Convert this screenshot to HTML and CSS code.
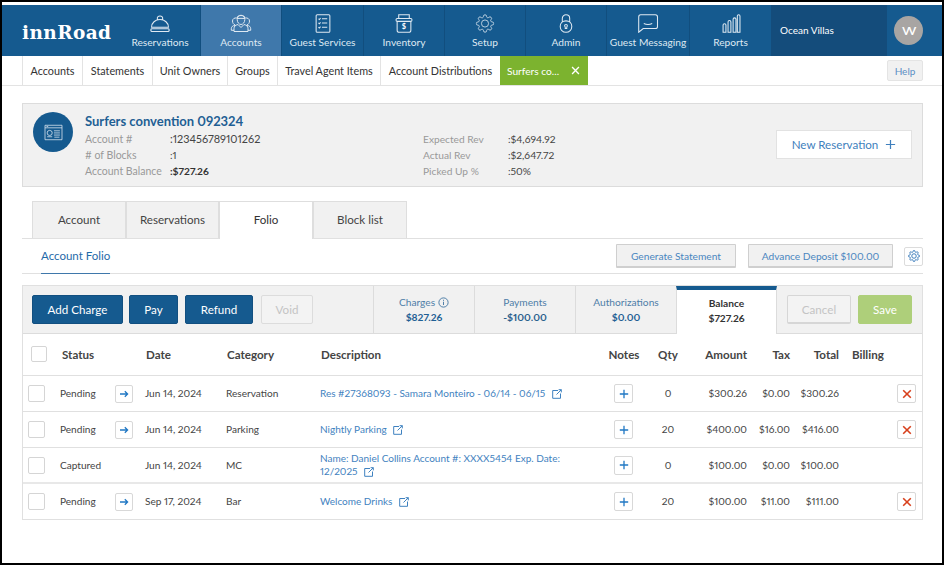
FILE: index.html
```html
<!DOCTYPE html>
<html lang="en">
<head>
<meta charset="utf-8">
<title>innRoad - Account Folio</title>
<link rel="stylesheet" href="styles.css">
</head>
<body>
<svg class="defs" width="0" height="0" aria-hidden="true">
  <symbol id="gear" viewBox="0 0 24 24">
    <circle cx="12" cy="12" r="4.5"/>
    <path d="M19.4 15a1.65 1.65 0 0 0 .33 1.82l.06.06a2 2 0 0 1 0 2.83 2 2 0 0 1-2.83 0l-.06-.06a1.65 1.65 0 0 0-1.82-.33 1.65 1.65 0 0 0-1 1.51V21a2 2 0 0 1-2 2 2 2 0 0 1-2-2v-.09A1.65 1.65 0 0 0 9 19.4a1.65 1.65 0 0 0-1.82.33l-.06.06a2 2 0 0 1-2.83 0 2 2 0 0 1 0-2.83l.06-.06a1.65 1.65 0 0 0 .33-1.82 1.65 1.65 0 0 0-1.51-1H3a2 2 0 0 1-2-2 2 2 0 0 1 2-2h.09A1.65 1.65 0 0 0 4.6 9a1.65 1.65 0 0 0-.33-1.82l-.06-.06a2 2 0 0 1 0-2.83 2 2 0 0 1 2.83 0l.06.06a1.65 1.65 0 0 0 1.82.33H9a1.65 1.65 0 0 0 1-1.51V3a2 2 0 0 1 2-2 2 2 0 0 1 2 2v.09a1.65 1.65 0 0 0 1 1.51 1.65 1.65 0 0 0 1.82-.33l.06-.06a2 2 0 0 1 2.83 0 2 2 0 0 1 0 2.83l-.06.06a1.65 1.65 0 0 0-.33 1.82V9a1.65 1.65 0 0 0 1.51 1H21a2 2 0 0 1 2 2 2 2 0 0 1-2 2h-.09a1.65 1.65 0 0 0-1.51 1z"/>
  </symbol>
  <symbol id="ext" viewBox="0 0 10 10">
    <path d="M6 1.5H.7v7.8h7.8V4.5M4.5 5.5 9.3.7M6.6.7h2.7v2.7"/>
  </symbol>
  <symbol id="arrow" viewBox="0 0 10 10">
    <path d="M1 5h7.5M5.8 2.2 8.6 5 5.8 7.8"/>
  </symbol>
  <symbol id="plus" viewBox="0 0 10 10">
    <path d="M5 .8v8.4M.8 5h8.4"/>
  </symbol>
  <symbol id="cross" viewBox="0 0 10 10">
    <path d="M1.2 1.2 8.8 8.8M8.8 1.2 1.2 8.8"/>
  </symbol>
</svg>

<div class="frame">
  <header class="nav">
    <div class="logo">innRoad</div>
    <a class="nav-item nav-wide">
      <svg class="nav-icon" viewBox="0 0 20 18"><path d="M2 12.5c0-4.2 3.5-7.2 8-7.2s8 3 8 7.2zM8 5.500c-.6-.7-.6-2.200.1-2.900.9-.9 2.900-.9 3.800 0 .7.7.7 2.200.1 2.900M2 14h16c.9 0 1 2.500 0 2.500H2c-1 0-.9-2.500 0-2.500z"/></svg>
      <span>Reservations</span>
    </a>
    <a class="nav-item nav-wide is-active">
      <svg class="nav-icon" viewBox="0 0 22 18"><path d="M11 1c2.500 0 3.800 1.800 3.800 4 0 2.600-1.700 5-3.800 5S7.200 7.600 7.200 5c0-2.200 1.300-4 3.800-4zM7.300 4C6.700 1.700 9 .8 11 .8s4.300.9 3.700 3.200c-2.400-.2-5-.2-7.400 0zM6.800 3.500C4.500 3.100 2.500 4.300 2.500 6.500c0 1.900 1 3.500 2.700 3.900M15.200 3.500c2.300-.4 4.300.8 4.300 3 0 1.900-1 3.500-2.700 3.900M8 10c-2.800.6-4 2-4 4v3h14v-3c0-2-1.200-3.400-4-4l-3 3zM5 10.700c-2.200.5-3.700 1.500-3.700 3.500v1.600H4M17 10.700c2.200.5 3.700 1.500 3.700 3.500v1.600H18"/></svg>
      <span>Accounts</span>
    </a>
    <a class="nav-item nav-mid">
      <svg class="nav-icon" viewBox="0 0 16 18"><path d="M2.500.7h11c.6 0 1 .4 1 1v14.600c0 .6-.4 1-1 1h-11c-.6 0-1-.4-1-1V1.700c0-.6.4-1 1-1zM7 4.500h5M7 8.500h5M7 12.500h5M3.700 4.500l.8.800 1.200-1.400M3.700 8.500l.8.800 1.200-1.400M3.700 12.500l.8.800 1.200-1.400"/></svg>
      <span>Guest Services</span>
    </a>
    <a class="nav-item nav-wide">
      <svg class="nav-icon" viewBox="0 0 18 18"><path d="M4 .7h10v3.500H4zM2.500 4.200h13c.6 0 1 .4 1 1v.8c0 .6-.4 1-1 1V15.300c0 1.100-.8 2-2 2H4.500c-1.200 0-2-.9-2-2V7c-.6 0-1-.4-1-1v-.8c0-.6.4-1 1-1zM2.500 7h13"/><text class="jar-text" x="9" y="14.500" text-anchor="middle">$</text></svg>
      <span>Inventory</span>
    </a>
    <a class="nav-item nav-wide">
      <svg class="nav-icon" viewBox="0 0 24 24"><use href="#gear"/></svg>
      <span>Setup</span>
    </a>
    <a class="nav-item nav-wide">
      <svg class="nav-icon" viewBox="0 0 16 18"><path d="M4.500 7.500V4.200C4.500 2.200 6 .8 8 .8s3.500 1.400 3.500 3.400v3.300M8 6.500c3.200 0 5.500 2.300 5.500 5.300S11.200 17.300 8 17.300s-5.500-2.500-5.500-5.500S4.800 6.500 8 6.500zM8 10c.8 0 1.300.6 1.300 1.200 0 .5-.2.800-.6 1.100v1.500H7.300v-1.500c-.4-.3-.6-.6-.6-1.100C6.700 10.600 7.200 10 8 10z"/></svg>
      <span>Admin</span>
    </a>
    <a class="nav-item nav-msg">
      <svg class="nav-icon" viewBox="0 0 20 18"><path d="M3 .8h14c1.200 0 2 .8 2 2v9c0 1.200-.8 2-2 2H5.500L1.200 17.300V2.800C1.200 1.600 1.900.8 3 .8zM6 9c2.500 1.200 5.500 1.200 8 0"/></svg>
      <span>Guest Messaging</span>
    </a>
    <a class="nav-item nav-wide nav-last">
      <svg class="nav-icon" viewBox="0 0 18 18"><path d="M1.500 10.500c0-1.800 2.700-1.800 2.700 0v6.800H1.500zM6.200 7.500c0-1.800 2.700-1.800 2.700 0v9.800H6.200zM11 5c0-1.800 2.700-1.800 2.700 0v12.300H11zM15 2c0-1.800 2.500-1.800 2.500 0v15.300H15z"/></svg>
      <span>Reports</span>
    </a>
    <div class="property">Ocean Villas</div>
    <div class="user"><span class="avatar">VV</span></div>
  </header>

  <nav class="subnav">
    <a class="sub-item">Accounts</a>
    <a class="sub-item">Statements</a>
    <a class="sub-item">Unit Owners</a>
    <a class="sub-item">Groups</a>
    <a class="sub-item">Travel Agent Items</a>
    <a class="sub-item">Account Distributions</a>
    <a class="sub-item sub-current">Surfers co...
      <svg class="sub-close" viewBox="0 0 10 10"><use href="#cross"/></svg>
    </a>
    <button class="help">Help</button>
  </nav>

  <main class="main">
    <section class="summary">
      <div class="summary-icon">
        <svg viewBox="0 0 22 20"><path d="M1 1.500h20v17H1zM1 4.500h20M2.800 3h2M11.500 8h7M11.500 10.500h7M11.500 13h7M12 15.500h6"/><circle cx="6.500" cy="10.500" r="3"/><path d="M3.500 15h6"/></svg>
      </div>
      <div class="summary-main">
        <h1 class="summary-title">Surfers convention 092324</h1>
        <dl class="facts">
          <dt>Account #</dt><dd class="long">:123456789101262</dd>
          <dt># of Blocks</dt><dd>:1</dd>
          <dt>Account Balance</dt><dd class="strong">:$727.26</dd>
        </dl>
      </div>
      <dl class="facts facts-right">
        <dt>Expected Rev</dt><dd>:$4,694.92</dd>
        <dt>Actual Rev</dt><dd>:$2,647.72</dd>
        <dt>Picked Up %</dt><dd>:50%</dd>
      </dl>
      <button class="new-res">New Reservation
        <svg viewBox="0 0 10 10"><use href="#plus"/></svg>
      </button>
    </section>

    <div class="tabs">
      <a class="tab">Account</a>
      <a class="tab">Reservations</a>
      <a class="tab tab-current">Folio</a>
      <a class="tab">Block list</a>
    </div>

    <div class="toolbar">
      <a class="folio-link">Account Folio</a>
      <button class="tool-btn tool-gen">Generate Statement</button>
      <button class="tool-btn tool-adv">Advance Deposit $100.00</button>
      <button class="gear-btn"><svg viewBox="0 0 24 24"><use href="#gear"/></svg></button>
    </div>

    <section class="panel">
      <div class="panel-head">
        <div class="actions">
          <button class="btn btn-primary btn-add">Add Charge</button>
          <button class="btn btn-primary btn-pay">Pay</button>
          <button class="btn btn-primary btn-refund">Refund</button>
          <button class="btn btn-off btn-void">Void</button>
        </div>
        <div class="totals">
          <div class="total">
            <span class="total-label">Charges <svg class="info" viewBox="0 0 10 10"><circle cx="5" cy="5" r="4.200"/><path d="M5 4.300v3M5 2.500v1"/></svg></span>
            <b>$827.26</b>
          </div>
          <div class="total"><span class="total-label">Payments</span><b>-$100.00</b></div>
          <div class="total"><span class="total-label">Authorizations</span><b>$0.00</b></div>
          <div class="total total-current"><span class="total-label">Balance</span><b>$727.26</b></div>
        </div>
        <div class="confirm">
          <button class="btn btn-off btn-cancel">Cancel</button>
          <button class="btn btn-save">Save</button>
        </div>
      </div>

      <div class="row row-head">
        <span class="check check-head"></span>
        <span>Status</span>
        <span></span>
        <span>Date</span>
        <span>Category</span>
        <span>Description</span>
        <span class="center">Notes</span>
        <span class="center">Qty</span>
        <span class="right">Amount</span>
        <span class="right">Tax</span>
        <span class="right">Total</span>
        <span class="billing">Billing</span>
        <span></span>
      </div>

      <div class="row">
        <span class="check"></span>
        <span>Pending</span>
        <button class="icon-btn"><svg viewBox="0 0 10 10"><use href="#arrow"/></svg></button>
        <span>Jun 14, 2024</span>
        <span>Reservation</span>
        <a class="desc">Res #27368093 - Samara Monteiro - 06/14 - 06/15 <svg class="ext" viewBox="0 0 10 10"><use href="#ext"/></svg></a>
        <button class="icon-btn plus-btn"><svg viewBox="0 0 10 10"><use href="#plus"/></svg></button>
        <span class="center">0</span>
        <span class="right">$300.26</span>
        <span class="right">$0.00</span>
        <span class="right">$300.26</span>
        <span></span>
        <button class="icon-btn del-btn"><svg viewBox="0 0 10 10"><use href="#cross"/></svg></button>
      </div>

      <div class="row">
        <span class="check"></span>
        <span>Pending</span>
        <button class="icon-btn"><svg viewBox="0 0 10 10"><use href="#arrow"/></svg></button>
        <span>Jun 14, 2024</span>
        <span>Parking</span>
        <a class="desc">Nightly Parking <svg class="ext" viewBox="0 0 10 10"><use href="#ext"/></svg></a>
        <button class="icon-btn plus-btn"><svg viewBox="0 0 10 10"><use href="#plus"/></svg></button>
        <span class="center">20</span>
        <span class="right">$400.00</span>
        <span class="right">$16.00</span>
        <span class="right">$416.00</span>
        <span></span>
        <button class="icon-btn del-btn"><svg viewBox="0 0 10 10"><use href="#cross"/></svg></button>
      </div>

      <div class="row">
        <span class="check"></span>
        <span>Captured</span>
        <span></span>
        <span>Jun 14, 2024</span>
        <span>MC</span>
        <a class="desc">Name: Daniel Collins Account #: XXXX5454 Exp. Date: 12/2025 <svg class="ext" viewBox="0 0 10 10"><use href="#ext"/></svg></a>
        <button class="icon-btn plus-btn"><svg viewBox="0 0 10 10"><use href="#plus"/></svg></button>
        <span class="center">0</span>
        <span class="right">$100.00</span>
        <span class="right">$0.00</span>
        <span class="right">$100.00</span>
        <span></span>
        <span></span>
      </div>

      <div class="row row-last">
        <span class="check"></span>
        <span>Pending</span>
        <button class="icon-btn"><svg viewBox="0 0 10 10"><use href="#arrow"/></svg></button>
        <span>Sep 17, 2024</span>
        <span>Bar</span>
        <a class="desc">Welcome Drinks <svg class="ext" viewBox="0 0 10 10"><use href="#ext"/></svg></a>
        <button class="icon-btn plus-btn"><svg viewBox="0 0 10 10"><use href="#plus"/></svg></button>
        <span class="center">20</span>
        <span class="right">$100.00</span>
        <span class="right">$11.00</span>
        <span class="right">$111.00</span>
        <span></span>
        <button class="icon-btn del-btn"><svg viewBox="0 0 10 10"><use href="#cross"/></svg></button>
      </div>
    </section>
  </main>
</div>
</body>
</html>
```

FILE: styles.css
```css
* { box-sizing: border-box; }
html, body { margin: 0; padding: 0; }
body {
  width: 944px;
  height: 565px;
  overflow: hidden;
  background: #fff;
  color: #444;
  font-family: Lato, "Liberation Sans", sans-serif;
  font-size: 11px;
  font-variant-numeric: proportional-nums;
}
button { font-family: inherit; font-variant-numeric: inherit; cursor: pointer; padding: 0; }
.defs { position: absolute; }
.frame {
  width: 944px;
  height: 565px;
  border: 2px solid #000;
  padding-top: 3px;
  overflow: hidden;
}

/* top navigation */
.nav {
  display: flex;
  height: 51px;
  background: #155a8f;
  color: #dfe9f2;
}
.logo {
  width: 118px;
  padding: 17px 0 0 20px;
  font-family: "DejaVu Serif", serif;
  font-size: 18.500px;
  font-weight: 700;
  letter-spacing: .4px;
  color: #fff;
  white-space: nowrap;
}
.nav-item {
  display: flex;
  flex-direction: column;
  align-items: center;
  padding-top: 9px;
  border-right: 1px solid #114e7e;
  font-size: 10.200px;
  white-space: nowrap;
}
.nav-wide { width: 81px; }
.nav-mid { width: 82px; }
.nav-msg { width: 83px; }
.nav-last { border-right: 0; }
.is-active { background: #3f78ab; }
.nav-icon {
  width: 22px;
  height: 19px;
  margin-bottom: 3px;
  fill: none;
  stroke: #dfe9f2;
  stroke-width: 1;
}
.jar-text { font-size: 7px; font-weight: 700; fill: #fff; stroke: none; font-family: Lato, sans-serif; }
.property {
  width: 116px;
  background: #144c7b;
  color: #fff;
  padding: 19px 0 0 9px;
  font-size: 10px;
  line-height: 13px;
}
.user { flex: 1; display: flex; align-items: center; padding: 0 0 1px 7px; }
.avatar {
  width: 29px;
  height: 29px;
  border-radius: 50%;
  background: #a8a5a3;
  color: #fff;
  font-size: 11px;
  font-weight: 700;
  letter-spacing: -1.500px;
  line-height: 29px;
  text-align: center;
}

/* secondary navigation */
.subnav {
  display: flex;
  height: 30px;
  padding-left: 20px;
  border-bottom: 1px solid #e3e3e3;
  position: relative;
}
.sub-item {
  display: flex;
  align-items: center;
  justify-content: center;
  height: 29px;
  border-left: 1px solid #e3e3e3;
  color: #333;
  font-size: 10.800px;
  white-space: nowrap;
}
.sub-item:nth-child(1) { width: 60px; }
.sub-item:nth-child(2) { width: 70px; }
.sub-item:nth-child(3) { width: 75px; }
.sub-item:nth-child(4) { width: 50px; }
.sub-item:nth-child(5) { width: 103px; }
.sub-item:nth-child(6) { width: 120px; }
.sub-current {
  width: 88px;
  border-left: 0;
  background: #7cb32f;
  color: #fff;
  font-size: 10.200px;
  justify-content: flex-start;
  padding-left: 7px;
  gap: 12px;
}
.sub-close { width: 9px; height: 9px; fill: none; stroke: #fff; stroke-width: 1.500; }
.help {
  width: 36px;
  height: 21px;
  margin: 4px 19px 0 auto;
  background: #f1f1f1;
  border: 1px solid #e4e4e4;
  border-radius: 2px;
  color: #5b8fc4;
  font-size: 10px;
}

/* main */
.main { padding: 17px 19px 0 20px; }
.summary {
  display: flex;
  height: 84px;
  background: #f1f1f1;
  border: 1px solid #dcdcdc;
  padding: 8px 10px 0 10px;
}
.summary-icon {
  flex: none;
  width: 40px;
  height: 40px;
  border-radius: 50%;
  background: #155a8f;
  display: flex;
  align-items: center;
  justify-content: center;
}
.summary-icon svg { width: 19px; height: 17px; fill: none; stroke: #dfe9f2; stroke-width: .9; }
.summary-main { width: 338px; margin-left: 12px; }
.summary-title {
  margin: 0;
  font-size: 13px;
  line-height: 18px;
  font-weight: 700;
  color: #1f5f94;
}
.facts {
  display: grid;
  grid-template-columns: 85px auto;
  margin: 1px 0 0;
  font-size: 10.500px;
  line-height: 16px;
}
.facts dt { color: #999; }
.facts dd { margin: 0; color: #444; font-size: 10.200px; }
.facts dd.long { font-size: 10.900px; }
.facts dd.strong { font-weight: 700; color: #333; }
.facts-right { width: 353px; margin-top: 19px; align-self: flex-start; font-size: 10.200px; }
.new-res {
  width: 136px;
  height: 29px;
  margin-top: 18px;
  background: #fff;
  border: 1px solid #e2e2e2;
  color: #3f7fbd;
  font-size: 11.600px;
  display: flex;
  align-items: center;
  justify-content: center;
  gap: 7px;
}
.new-res svg { width: 11px; height: 11px; fill: none; stroke: #3f7fbd; stroke-width: 1.100; }

/* tabs */
.tabs {
  display: flex;
  height: 38px;
  margin-top: 14px;
  padding-left: 10px;
  border-bottom: 1px solid #e0e0e0;
}
.tab {
  width: 94px;
  height: 37px;
  padding-bottom: 2px;
  background: #f1f1f1;
  border: 1px solid #dedede;
  border-bottom: 0;
  display: flex;
  align-items: center;
  justify-content: center;
  font-size: 11.600px;
  color: #444;
}
.tab:nth-child(2) { width: 93px; }
.tab-current { height: 38px; background: #fff; color: #333; }

.toolbar {
  display: flex;
  align-items: center;
  height: 35px;
  border-bottom: 1px solid #e0e0e0;
  position: relative;
}
.folio-link {
  align-self: stretch;
  display: flex;
  align-items: center;
  margin: 0 0 -1px 19px;
  padding: 0 0 1px;
  border-bottom: 1px solid #3f78ab;
  color: #1f6aa8;
  font-size: 11.500px;
}
.tool-btn {
  height: 24px;
  background: #f1f1f1;
  border: 1px solid #cfcfcf;
  border-bottom-width: 2px;
  border-radius: 1px;
  color: #4a86c0;
  font-size: 10.200px;
}
.tool-gen { width: 120px; margin-left: auto; }
.tool-adv { width: 145px; margin-left: 12px; }
.gear-btn {
  width: 19px;
  height: 19px;
  margin-left: 11px;
  background: #fff;
  border: 1px solid #dcdcdc;
  border-radius: 2px;
  display: flex;
  align-items: center;
  justify-content: center;
}
.gear-btn svg { width: 12px; height: 12px; fill: none; stroke: #3f7fbd; stroke-width: 2; }

/* folio panel */
.panel {
  margin-top: 11px;
  border: 1px solid #e0e0e0;
}
.panel-head {
  display: flex;
  height: 48px;
  background: #f1f1f1;
  border-bottom: 1px solid #dcdcdc;
}
.actions {
  width: 350px;
  display: flex;
  padding: 9px 0 0 9px;
}
.btn {
  height: 29px;
  border-radius: 2px;
  font-size: 11.600px;
}
.btn-primary { background: #155a8f; border: 1px solid #124f80; color: #fff; }
.btn-off { background: #f3f3f3; border: 1px solid #dcdcdc; color: #c4c4c4; }
.btn-add { width: 91px; }
.btn-pay { width: 49px; margin-left: 6px; }
.btn-refund { width: 68px; margin-left: 7px; }
.btn-void { width: 52px; margin-left: 8px; }
.totals { display: flex; }
.total {
  width: 101px;
  display: flex;
  flex-direction: column;
  align-items: center;
  justify-content: center;
  border-left: 1px solid #dcdcdc;
  font-size: 10.200px;
  line-height: 15px;
  color: #1f5f94;
}
.total b { font-weight: 700; font-size: 10.200px; }
.total-label { display: flex; align-items: center; gap: 3px; color: #4f7ea8; }
.total:nth-child(2) b { color: #2a5f8d; }
.total:nth-child(3) b { color: #1f5f94; }
.info { width: 11px; height: 11px; fill: none; stroke: #4f7ea8; stroke-width: .9; }
.total-current {
  background: #fff;
  border-top: 4px solid #155a8f;
  border-right: 1px solid #dcdcdc;
  margin-bottom: -1px;
  padding-bottom: 2px;
}
.total-current .total-label { color: #333; font-weight: 700; }
.total-current b { color: #333; }
.confirm { display: flex; padding: 9px 0 0 10px; }
.btn-cancel { width: 64px; border-width: 1px 1px 2px; border-color: #d6d6d6; }
.btn-save { width: 54px; margin-left: 7px; background: #aecf7a; border: 1px solid #aecf7a; color: #fff; }

/* table */
.row {
  display: grid;
  grid-template-columns: 32px 55px 30px 81px 94px 285px 38px 50px 54px 43px 49px 58px 19px;
  align-items: center;
  height: 36px;
  padding-left: 5px;
  border-bottom: 1px solid #e0e0e0;
  font-size: 10.100px;
  line-height: 13px;
  color: #444;
}
.row-head {
  height: 42px;
  padding-bottom: 1px;
  font-size: 11.600px;
  font-weight: 700;
  color: #444;
}
.row-last { height: 35px; border-bottom: 0; }
.row:nth-of-type(5) { border-bottom: 2px solid #e8e8e8; }
.center { text-align: center; }
.right { text-align: right; }
.billing { padding-left: 13px; }
.row-head > span:nth-child(2) { padding-left: 2px; }
.row-head > span:nth-child(4),
.row-head > span:nth-child(5),
.row-head > span:nth-child(6) { padding-left: 1px; }
.check {
  width: 17px;
  height: 17px;
  background: #fff;
  border: 1px solid #d5d5d5;
  border-radius: 2px;
}
.check-head { margin-left: 3px; width: 16px; height: 16px; }
.desc { color: #3f82c0; padding-right: 30px; font-size: 10px; }
.ext { width: 10px; height: 10px; margin-left: 4px; fill: none; stroke: #3f82c0; stroke-width: 1; vertical-align: -1.500px; }
.icon-btn {
  width: 18px;
  height: 18px;
  background: #fff;
  border: 1px solid #d8d8d8;
  border-radius: 2px;
  display: flex;
  align-items: center;
  justify-content: center;
}
.icon-btn svg { width: 10px; height: 10px; fill: none; stroke: #2178c4; stroke-width: 1.300; }
.plus-btn { width: 19px; height: 19px; margin-left: 9px; }
.del-btn { width: 19px; height: 19px; }
.del-btn svg { stroke: #d8401c; stroke-width: 1.600; }
```
